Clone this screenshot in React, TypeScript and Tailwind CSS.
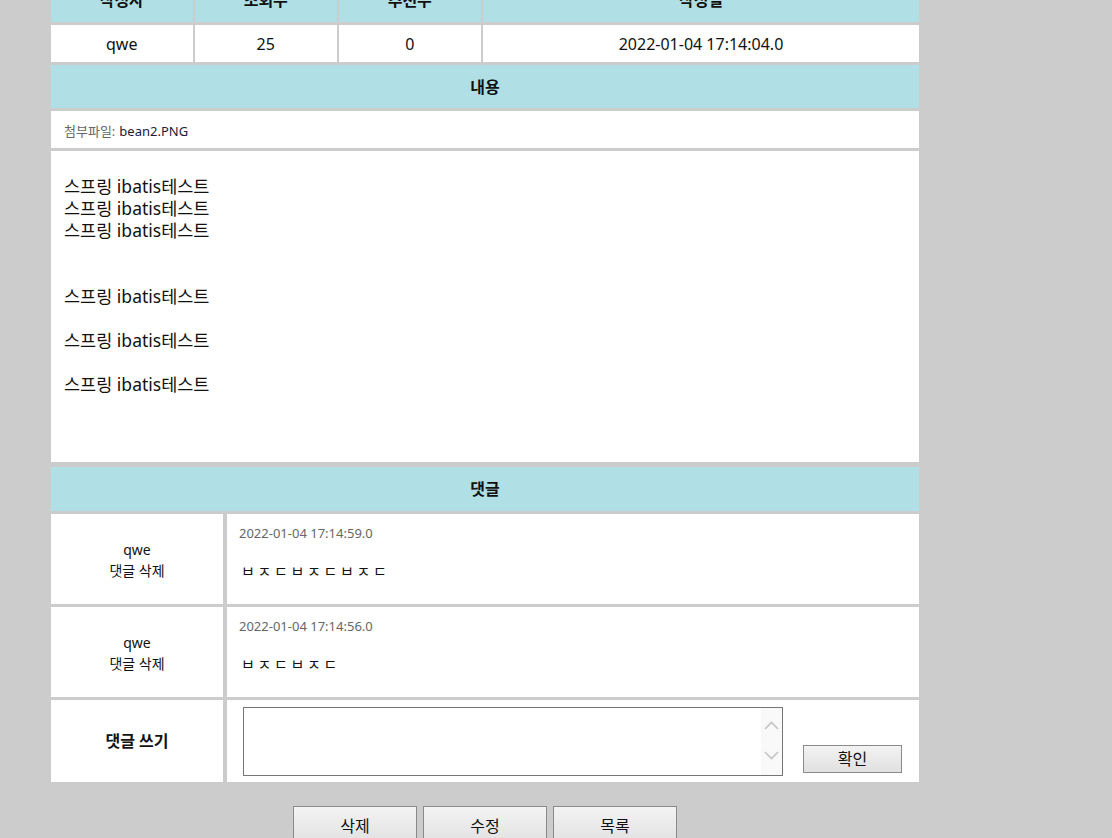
import React from "react";

const font = { fontFamily: '"Noto Sans", "Noto Sans CJK KR", sans-serif' };

function Chevron({ up }: { up?: boolean }) {
  return (
    <svg width="15" height="9" viewBox="0 0 15 9" fill="none">
      <path
        d={up ? "M1 8 L7.5 1.5 L14 8" : "M1 1 L7.5 7.5 L14 1"}
        stroke="#c4c4c4"
        strokeWidth="1.6"
      />
    </svg>
  );
}

function CommentRow({ date, text }: { date: string; text: string }) {
  return (
    <div className="flex gap-[4px] h-[90px]">
      <div className="w-[172px] bg-white flex flex-col items-center justify-center text-[14px] leading-[21px] text-[#111] pt-[2px]">
        <div>qwe</div>
        <div>댓글 삭제</div>
      </div>
      <div className="flex-1 bg-white pl-[12px] pt-[10px]">
        <div className="text-[13px] leading-[18px] text-[#666]">{date}</div>
        <div className="mt-[19px] text-[15px] tracking-[2.7px] leading-[20px] pl-[2px] text-[#111]">{text}</div>
      </div>
    </div>
  );
}

export default function App() {
  const cyan = "bg-[#b0dfe5]";
  return (
    <div className="h-[838px] w-full overflow-hidden bg-[#cccccc] text-[#111]" style={font}>
      <div className="ml-[51px] w-[868px] -mt-[22px] flex flex-col">
        {/* top info table */}
        <div className="flex flex-col gap-[3px]">
          <div className="flex gap-[2.5px] h-[44px] text-[16px] font-bold">
            <div className={`w-[141.5px] ${cyan} flex items-center justify-center`}>작성자</div>
            <div className={`w-[141.5px] ${cyan} flex items-center justify-center`}>조회수</div>
            <div className={`w-[141.5px] ${cyan} flex items-center justify-center`}>추천수</div>
            <div className={`flex-1 ${cyan} flex items-center justify-center`}>작성일</div>
          </div>
          <div className="flex gap-[2.5px] h-[37px] text-[16px]">
            <div className="w-[141.5px] bg-white flex items-center justify-center">qwe</div>
            <div className="w-[141.5px] bg-white flex items-center justify-center">25</div>
            <div className="w-[141.5px] bg-white flex items-center justify-center">0</div>
            <div className="flex-1 bg-white flex items-center justify-center">2022-01-04 17:14:04.0</div>
          </div>
          <div className={`h-[43px] ${cyan} flex items-center justify-center text-[16px] font-bold`}>내용</div>
          <div className="h-[37px] bg-white flex items-center pl-[13px] pt-[4px] text-[13px]">
            <span className="text-[#666]">첨부파일:</span>
            <span className="ml-[4px] text-[#1a1a3a]">bean2.PNG</span>
          </div>
          <div className="h-[311px] bg-white pl-[13px] pt-[24px] text-[17.5px] leading-[22px]">
            <div>스프링 ibatis테스트</div>
            <div>스프링 ibatis테스트</div>
            <div>스프링 ibatis테스트</div>
            <div className="h-[22px]" />
            <div className="h-[22px]" />
            <div>스프링 ibatis테스트</div>
            <div className="h-[22px]" />
            <div>스프링 ibatis테스트</div>
            <div className="h-[22px]" />
            <div>스프링 ibatis테스트</div>
          </div>
        </div>

        {/* comments table */}
        <div className="mt-[5px] flex flex-col gap-[3px]">
          <div className={`h-[44px] ${cyan} flex items-center justify-center text-[16px] font-bold`}>댓글</div>
          <CommentRow date="2022-01-04 17:14:59.0" text="ㅂㅈㄷㅂㅈㄷㅂㅈㄷ" />
          <CommentRow date="2022-01-04 17:14:56.0" text="ㅂㅈㄷㅂㅈㄷ" />
          <div className="flex gap-[4px] h-[82px]">
            <div className="w-[172px] bg-white flex items-center justify-center text-[16px] font-bold">댓글 쓰기</div>
            <div className="flex-1 bg-white flex items-start pl-[16px] pt-[6.5px]">
              <div className="w-[540px] h-[69px] border border-[#767676] flex">
                <textarea className="flex-1 resize-none outline-none bg-white" />
                <div className="w-[21px] bg-[#f9f9f9] flex flex-col items-center justify-between pt-[13px] pb-[15px]">
                  <Chevron up />
                  <Chevron />
                </div>
              </div>
              <button className="ml-[20px] mt-[38.5px] w-[99px] h-[28px] border border-[#8a8a8a] bg-linear-to-b from-[#f3f3f3] to-[#e0e0e0] text-[16px] leading-none text-[#111]">
                확인
              </button>
            </div>
          </div>
        </div>

        {/* buttons */}
        <div className="mt-[24px] flex justify-center gap-[5.5px]">
          {["삭제", "수정", "목록"].map((t) => (
            <button
              key={t}
              className="w-[124.5px] h-[42px] border border-[#8a8a8a] bg-linear-to-b from-[#f3f3f3] to-[#e0e0e0] text-[16px] text-[#111] pb-[2px]"
            >
              {t}
            </button>
          ))}
        </div>
      </div>
    </div>
  );
}
